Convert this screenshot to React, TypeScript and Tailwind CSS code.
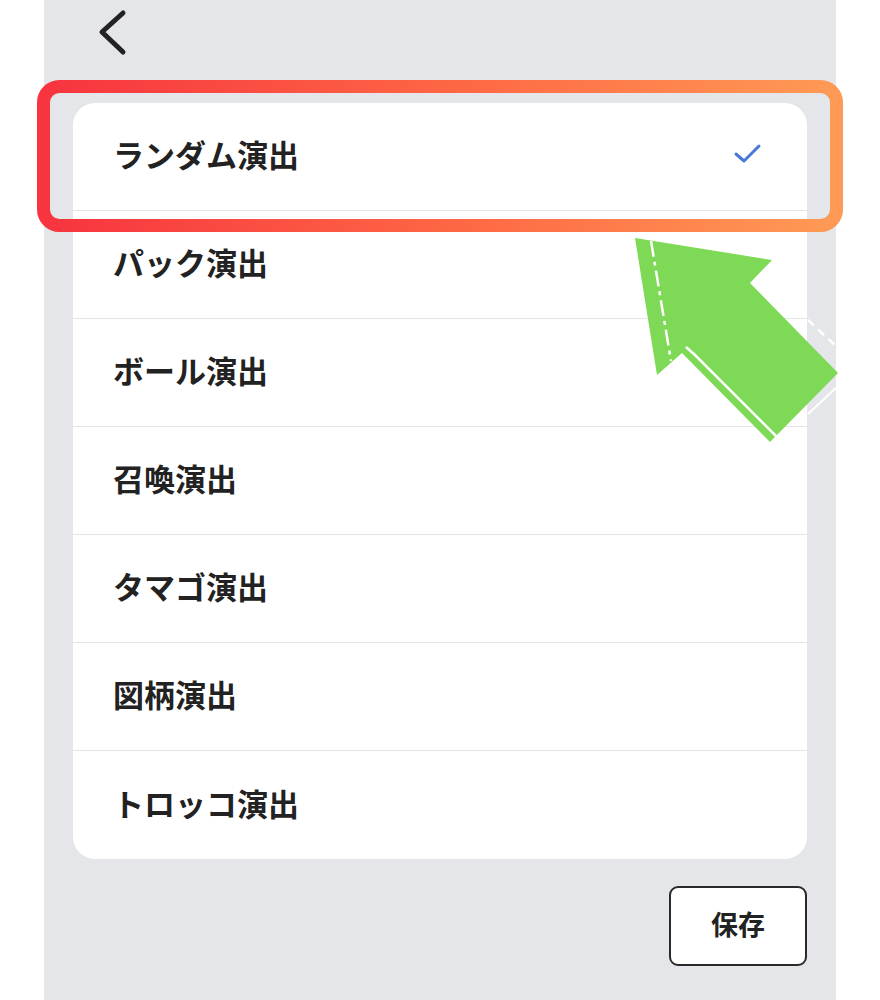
import React from 'react';

const items = ['ランダム演出', 'パック演出', 'ボール演出', '召喚演出', 'タマゴ演出', '図柄演出', 'トロッコ演出'];

function Chevron() {
  return (
    <svg width="34" height="50" viewBox="0 0 34 50" fill="none">
      <polyline points="25,5 4,24 25,44" stroke="#222" strokeWidth="5" strokeLinecap="round" strokeLinejoin="round" />
    </svg>
  );
}

function Check() {
  return (
    <svg width="30" height="26" viewBox="0 0 30 26" fill="none">
      <polyline points="3,13 11,20 26,5" stroke="#4a78d6" strokeWidth="3" strokeLinecap="round" strokeLinejoin="round" />
    </svg>
  );
}

function Highlight() {
  return (
    <svg className="pointer-events-none absolute left-[-7px] top-[80px]" width="806" height="152" viewBox="0 0 806 152">
      <defs>
        <linearGradient id="hl" x1="0" y1="0" x2="1" y2="0">
          <stop offset="0" stopColor="#f7343f" />
          <stop offset="0.55" stopColor="#fe6a45" />
          <stop offset="1" stopColor="#fe9a55" />
        </linearGradient>
      </defs>
      <rect x="6.5" y="6.5" width="793" height="139" rx="16" fill="none" stroke="url(#hl)" strokeWidth="13" />
    </svg>
  );
}

function Arrow() {
  // drawn in page coordinates
  return (
    <svg className="pointer-events-none absolute left-[576px] top-[225px]" width="260" height="230" viewBox="620 225 260 230">
      <polygon
        points="635,238 772,260 750,283 838,373 770,442 682,353 657,375"
        fill="#7ed957"
      />
      <line x1="651" y1="241" x2="671" y2="361" stroke="#fff" strokeWidth="2.5" strokeDasharray="16 5 4 5" />
      <polyline points="686,347 695,355 777,437" stroke="#fff" strokeWidth="2.5" fill="none" />
      <line x1="808" y1="320" x2="836" y2="346" stroke="#fff" strokeWidth="2.5" strokeDasharray="8 6" />
      <line x1="838" y1="386" x2="808" y2="414" stroke="#fff" strokeWidth="2" />
    </svg>
  );
}

export default function App() {
  return (
    <div className="min-h-screen bg-white" style={{ fontFamily: '"Noto Sans CJK JP", "Noto Sans", sans-serif' }}>
      <div className="relative ml-[44px] h-[1000px] w-[792px] overflow-visible bg-[#e5e6ea] px-[29px]">
        <div className="flex h-[103px] items-start pl-[25px] pt-[8px]">
          <Chevron />
        </div>
        <div className="overflow-hidden rounded-[22px] bg-white">
          {items.map((label, i) => (
            <div
              key={label}
              className={`flex h-[108px] items-center justify-between pb-[6px] pl-[40px] pr-[44px] ${i < items.length - 1 ? 'border-b border-[#e4e4e6]' : ''}`}
            >
              <span className="text-[31px] font-bold leading-none text-[#222]">{label}</span>
              {i === 0 && <Check />}
            </div>
          ))}
        </div>
        <div className="mt-[27px] flex justify-end">
          <button className="flex h-[80px] w-[138px] items-center justify-center rounded-[9px] border-2 border-[#2a2a2a] bg-white pb-[3px] text-[27px] font-bold text-[#222]">
            保存
          </button>
        </div>
        <Highlight />
        <Arrow />
      </div>
    </div>
  );
}
